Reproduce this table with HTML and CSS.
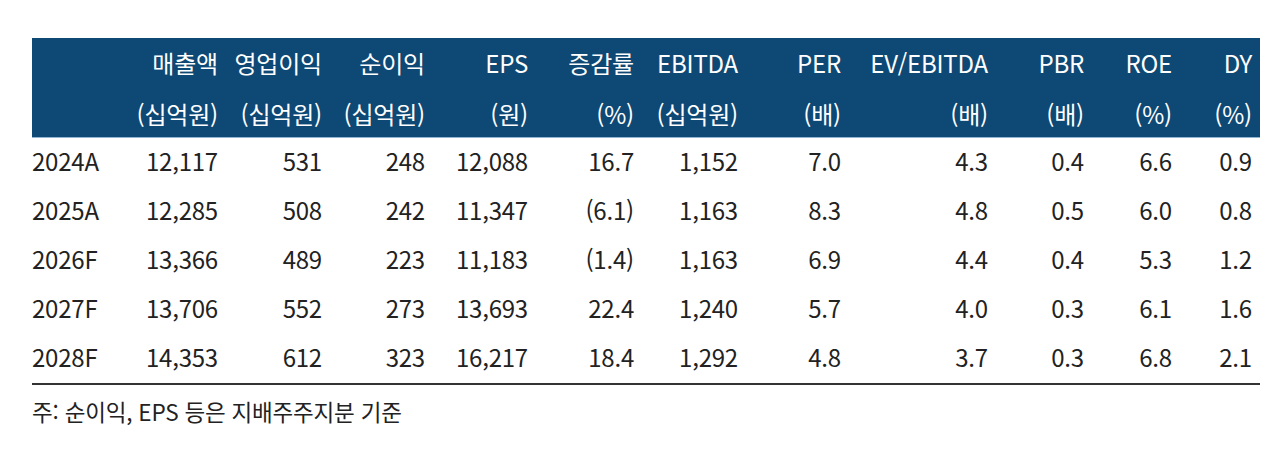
FILE: index.html
```html
<!DOCTYPE html>
<html lang="ko">
<head>
<meta charset="utf-8">
<link rel="stylesheet" href="styles.css">
</head>
<body>
<div class="wrap">
  <div class="table">
    <div class="head">
      <div class="row">
        <div class="lbl"></div>
        <div>매출액</div><div>영업이익</div><div>순이익</div><div>EPS</div><div>증감률</div><div>EBITDA</div><div>PER</div><div>EV/EBITDA</div><div>PBR</div><div>ROE</div><div>DY</div>
      </div>
      <div class="row">
        <div class="lbl"></div>
        <div>(십억원)</div><div>(십억원)</div><div>(십억원)</div><div>(원)</div><div>(%)</div><div>(십억원)</div><div>(배)</div><div>(배)</div><div>(배)</div><div>(%)</div><div>(%)</div>
      </div>
    </div>
    <div class="body">
      <div class="row">
        <div class="lbl">2024A</div>
        <div>12,117</div><div>531</div><div>248</div><div>12,088</div><div>16.7</div><div>1,152</div><div>7.0</div><div>4.3</div><div>0.4</div><div>6.6</div><div>0.9</div>
      </div>
      <div class="row">
        <div class="lbl">2025A</div>
        <div>12,285</div><div>508</div><div>242</div><div>11,347</div><div>(6.1)</div><div>1,163</div><div>8.3</div><div>4.8</div><div>0.5</div><div>6.0</div><div>0.8</div>
      </div>
      <div class="row">
        <div class="lbl">2026F</div>
        <div>13,366</div><div>489</div><div>223</div><div>11,183</div><div>(1.4)</div><div>1,163</div><div>6.9</div><div>4.4</div><div>0.4</div><div>5.3</div><div>1.2</div>
      </div>
      <div class="row">
        <div class="lbl">2027F</div>
        <div>13,706</div><div>552</div><div>273</div><div>13,693</div><div>22.4</div><div>1,240</div><div>5.7</div><div>4.0</div><div>0.3</div><div>6.1</div><div>1.6</div>
      </div>
      <div class="row">
        <div class="lbl">2028F</div>
        <div>14,353</div><div>612</div><div>323</div><div>16,217</div><div>18.4</div><div>1,292</div><div>4.8</div><div>3.7</div><div>0.3</div><div>6.8</div><div>2.1</div>
      </div>
    </div>
  </div>
  <p class="note">주: 순이익, EPS 등은 지배주주지분 기준</p>
</div>
</body>
</html>
```

FILE: styles.css
```css
html, body {
  margin: 0;
  padding: 0;
  background: #ffffff;
}

body {
  font-family: "Noto Sans CJK KR", "Noto Sans", sans-serif;
  color: #222222;
}

.wrap {
  padding: 38px 20px 0 32px;
}

.table {
  width: 1228px;
}

.row {
  display: grid;
  grid-template-columns: 86px 100px 104px 103px 103px 106px 104px 103px 147px 96px 88px 80px;
  padding-right: 8px;
  font-size: 24px;
  letter-spacing: -0.2px;
}

.row > div {
  text-align: right;
  white-space: nowrap;
}

.row > .lbl {
  text-align: left;
}

.head {
  background: #0e4874;
  color: #ffffff;
  border-bottom: 1px solid #8fb4d4;
}

.head .row {
  height: 49.5px;
}

.head .row:first-child {
  line-height: 50px;
}

.head .row:last-child {
  line-height: 52px;
}

.body {
  border-bottom: 2px solid #333333;
}

.body .row {
  height: 49px;
  line-height: 45px;
}

.note {
  margin: 10px 0 0 0;
  font-size: 22.5px;
  line-height: 32px;
  letter-spacing: -0.2px;
  color: #222222;
}
```
